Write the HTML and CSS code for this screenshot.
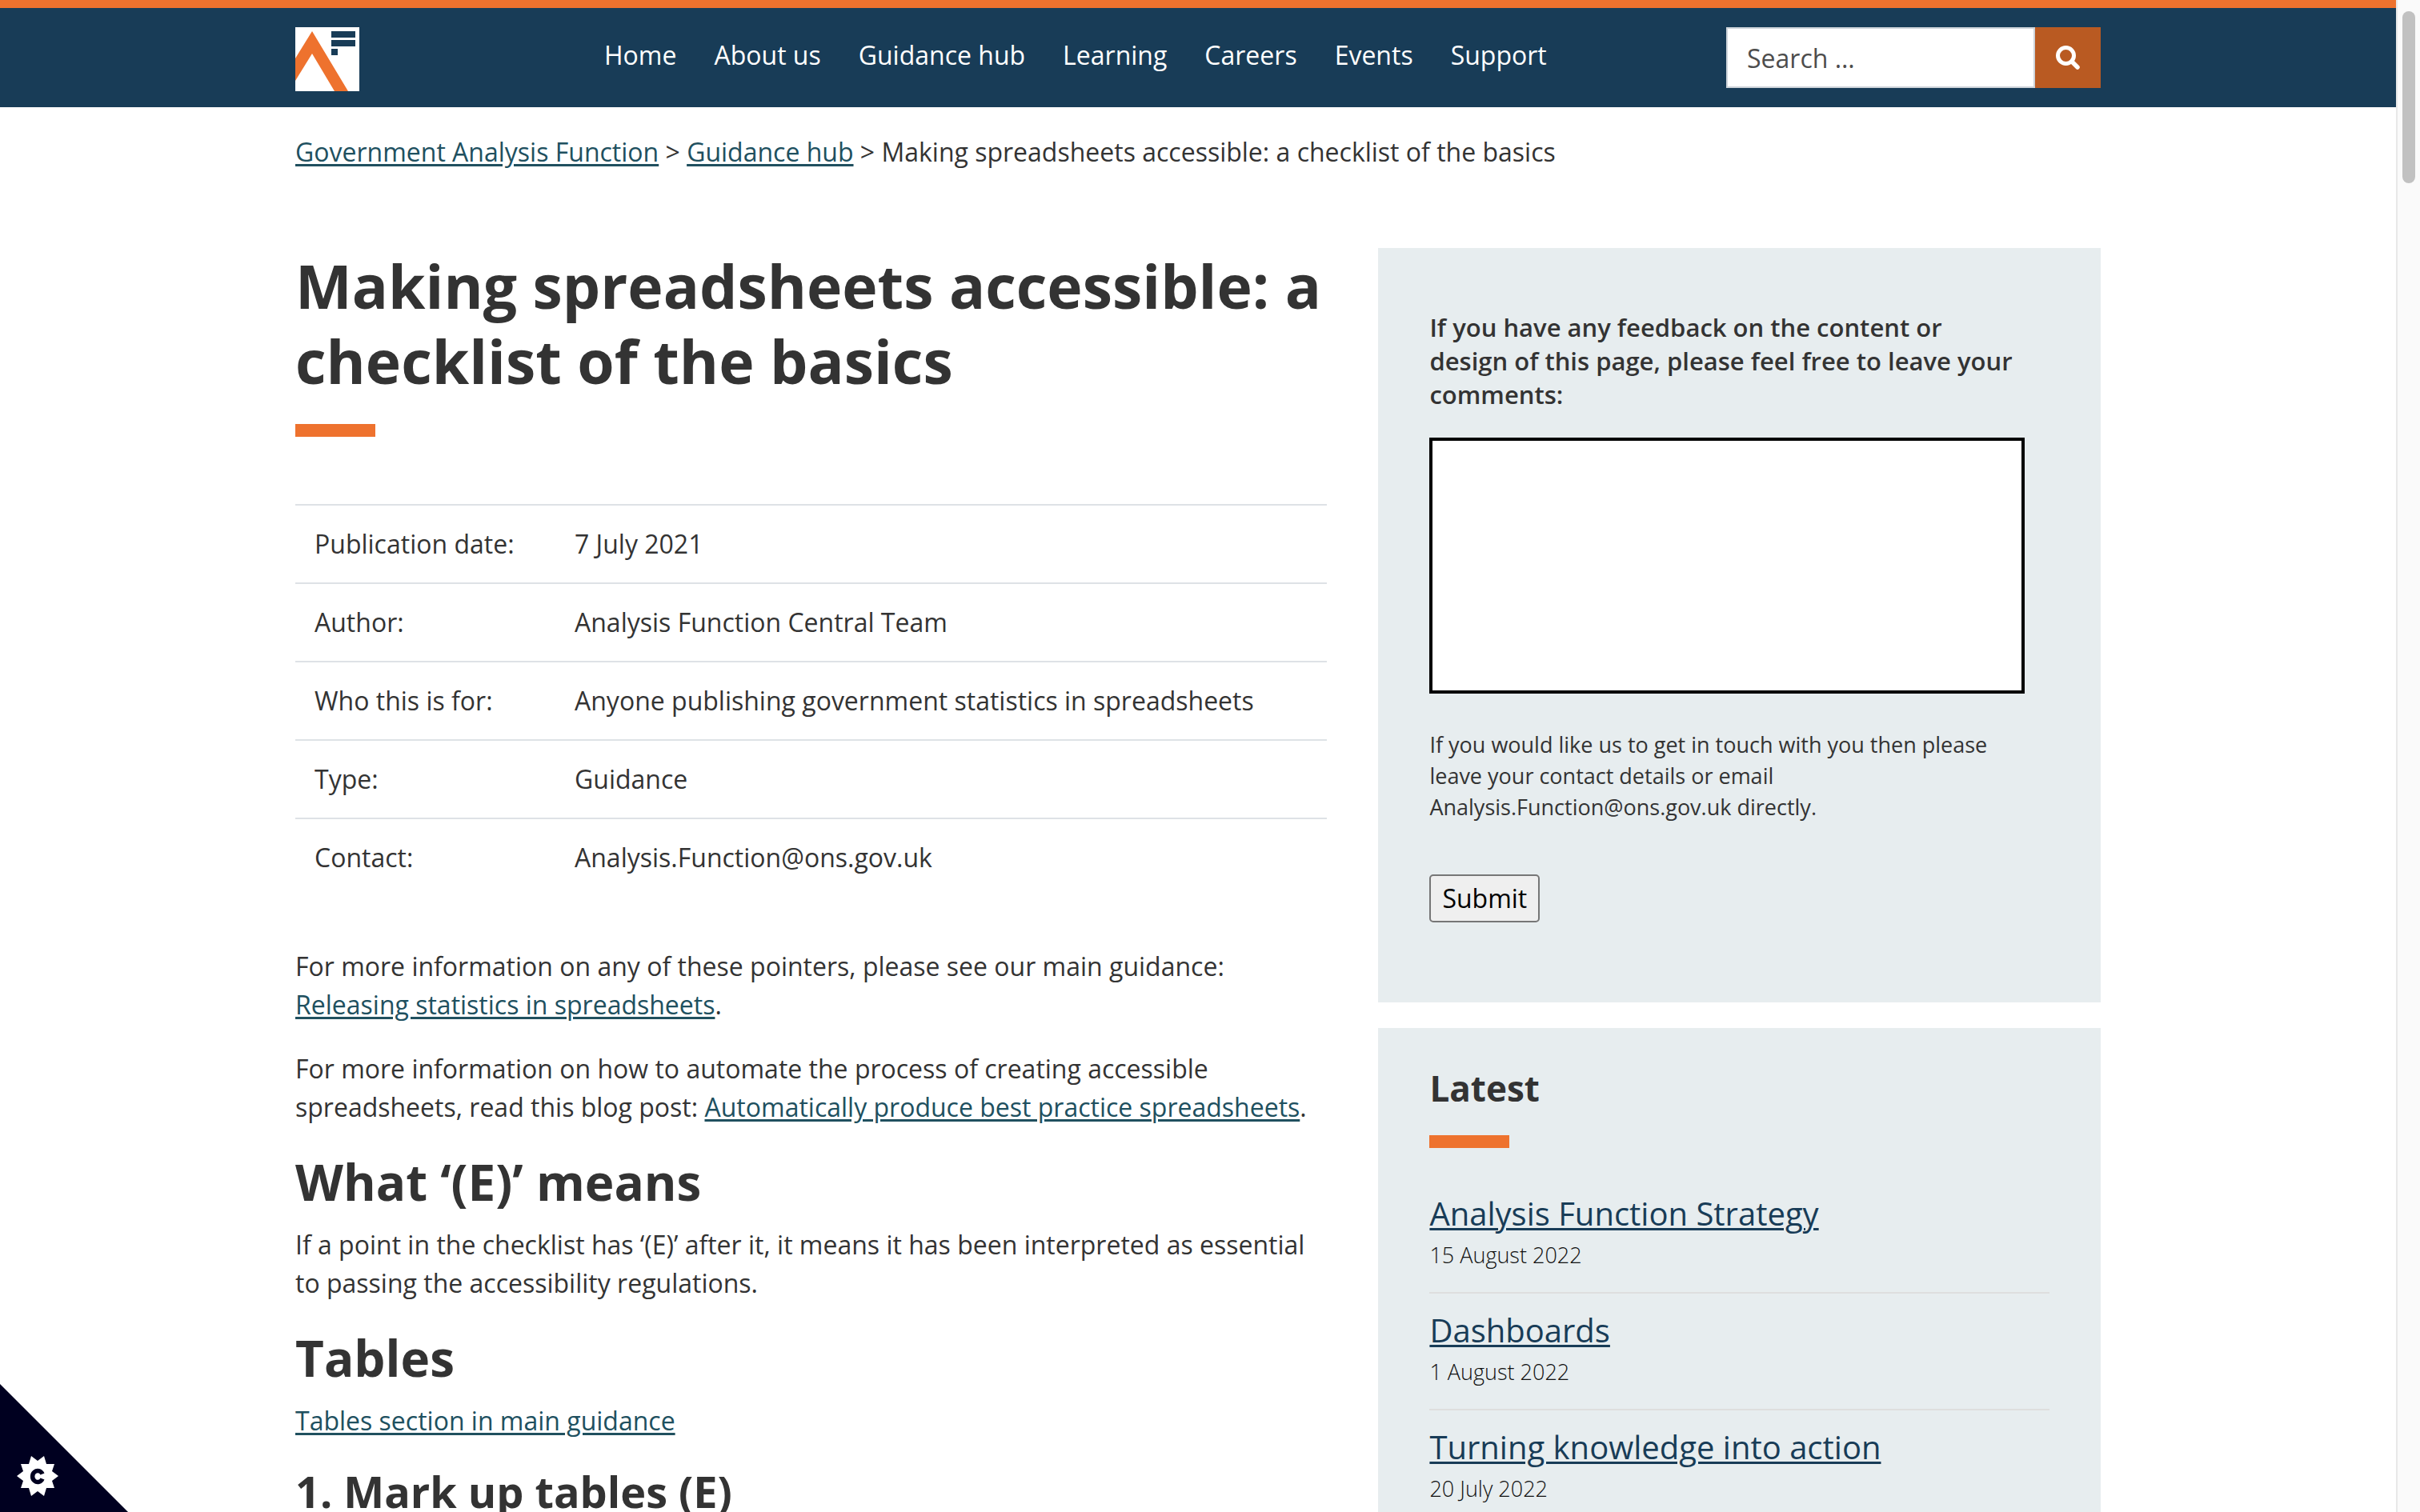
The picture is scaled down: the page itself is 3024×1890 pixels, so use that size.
FILE: index.html
```html
<!DOCTYPE html>
<html lang="en">
<head>
<meta charset="utf-8">
<meta name="viewport" content="width=device-width, initial-scale=1">
<title>Making spreadsheets accessible: a checklist of the basics</title>
<link rel="stylesheet" href="styles.css">
</head>
<body>
<header class="site-header">
  <div class="container header-row">
    <a class="logo" href="#" aria-label="Government Analysis Function home">
      <svg viewBox="0 0 80 80" width="80" height="80" aria-hidden="true">
        <rect width="80" height="80" fill="#fff"/>
        <path d="M0 39 21 5 66 80H49L21 33 0 67Z" fill="#ee722e"/>
        <path d="M45 5h30v8H45zM45 16h30v8H45zM45 27h8v8h-8z" fill="#183c57"/>
      </svg>
    </a>
    <nav class="main-nav" aria-label="Main">
      <a href="#">Home</a>
      <a href="#">About us</a>
      <a href="#">Guidance hub</a>
      <a href="#">Learning</a>
      <a href="#">Careers</a>
      <a href="#">Events</a>
      <a href="#">Support</a>
    </nav>
    <form class="search" role="search">
      <input class="search-input" type="search" placeholder="Search …" aria-label="Search">
      <button class="search-button" type="submit" aria-label="Search">
        <svg viewBox="0 0 30 30" width="30" height="30" fill="none" stroke="#fff" aria-hidden="true">
          <circle cx="12.500" cy="12.500" r="10" stroke-width="5"/>
          <path d="M20 20l7 7" stroke-width="5.500" stroke-linecap="round"/>
        </svg>
      </button>
    </form>
  </div>
</header>

<div class="container">
  <nav class="breadcrumb" aria-label="Breadcrumb">
    <a href="#">Government Analysis Function</a> &gt; <a href="#">Guidance hub</a> &gt; <span>Making spreadsheets accessible: a checklist of the basics</span>
  </nav>

  <div class="columns">
    <main class="article">
      <h1 class="page-title">Making spreadsheets accessible: a checklist of the basics</h1>
      <table class="details">
        <tbody>
          <tr><th scope="row">Publication date:</th><td>7 July 2021</td></tr>
          <tr><th scope="row">Author:</th><td>Analysis Function Central Team</td></tr>
          <tr><th scope="row">Who this is for:</th><td>Anyone publishing government statistics in spreadsheets</td></tr>
          <tr><th scope="row">Type:</th><td>Guidance</td></tr>
          <tr><th scope="row">Contact:</th><td>Analysis.Function@ons.gov.uk</td></tr>
        </tbody>
      </table>
      <p>For more information on any of these pointers, please see our main guidance: <a href="#">Releasing statistics in spreadsheets</a>.</p>
      <p>For more information on how to automate the process of creating accessible spreadsheets, read this blog post: <a href="#">Automatically produce best practice spreadsheets</a>.</p>
      <h2>What ‘(E)’ means</h2>
      <p>If a point in the checklist has ‘(E)’ after it, it means it has been interpreted as essential to passing the accessibility regulations.</p>
      <h2>Tables</h2>
      <p><a href="#">Tables section in main guidance</a></p>
      <h3>1. Mark up tables (E)</h3>
    </main>

    <aside class="sidebar">
      <form class="card feedback">
        <label class="feedback-label" for="comments">If you have any feedback on the content or design of this page, please feel free to leave your comments:</label>
        <textarea class="feedback-text" id="comments"></textarea>
        <p class="feedback-note">If you would like us to get in touch with you then please leave your contact details or email Analysis.Function@ons.gov.uk directly.</p>
        <button class="submit" type="submit">Submit</button>
      </form>
      <section class="card latest">
        <h2 class="latest-title">Latest</h2>
        <ul class="latest-list">
          <li><a href="#">Analysis Function Strategy</a><time datetime="2022-08-15">15 August 2022</time></li>
          <li><a href="#">Dashboards</a><time datetime="2022-08-01">1 August 2022</time></li>
          <li><a href="#">Turning knowledge into action</a><time datetime="2022-07-20">20 July 2022</time></li>
        </ul>
      </section>
    </aside>
  </div>
</div>

<button class="cookie-corner" type="button" aria-label="Cookie settings">
  <svg viewBox="-26 -26 52 52" width="52" height="52" aria-hidden="true">
    <path fill="#fff" d="M26 0 18 6 21 15H11L8 25 0 19-8 25-11 15H-21L-18 6-26 0-18-6-21-15H-11L-8-25 0-19 8-25 11-15H21L18-6Z"/>
    <path fill="none" stroke="#000020" stroke-width="5.500" d="M6 -2.500A6.500 7 0 1 0 6 3.500"/>
  </svg>
</button>
<div class="scroll-track" aria-hidden="true"><div class="scroll-thumb"></div></div>
</body>
</html>
```
FILE: styles.css
```css
:root {
  --navy: #183c57;
  --orange: #ee722e;
  --link: #20505f;
  --text: #333;
}

* {
  box-sizing: border-box;
}

html {
  scrollbar-width: none;
}

body {
  margin: 0;
  padding-right: 30px;
  background: #fff;
  color: var(--text);
  font: 32px/48px "Open Sans", "Noto Sans", sans-serif;
}

a {
  color: var(--link);
  text-decoration-thickness: 3px;
  text-underline-offset: 3px;
}

.container {
  max-width: 2256px;
  margin: 0 auto;
}

/* Header */
.site-header {
  border-top: 10px solid var(--orange);
  background: var(--navy);
}

.header-row {
  display: flex;
  align-items: flex-start;
  padding: 24px 0 20px;
}

.logo svg,
.search svg {
  display: block;
}

.main-nav {
  display: flex;
  gap: 47px;
  margin-left: 306px;
  padding-top: 11px;
}

.main-nav a {
  color: #fff;
  text-decoration: none;
}

.search {
  display: flex;
  margin-left: auto;
}

.search-input {
  width: 386px;
  height: 76px;
  padding: 0 24px;
  border: 2px solid #ced4da;
  border-radius: 0;
  appearance: none;
  background: #fff;
  color: var(--text);
  font: inherit;
}

.search-input::placeholder {
  color: #4d4d4d;
  opacity: 1;
}

.search-button {
  display: flex;
  align-items: center;
  justify-content: center;
  width: 82px;
  padding: 0;
  border: 0;
  background: #b95a22;
}

/* Page */
.breadcrumb {
  padding: 32px 0 96px;
}

.columns {
  display: grid;
  grid-template-columns: 10fr 7fr;
  gap: 64px;
  align-items: start;
}

.page-title {
  margin: 0 0 84px;
  font-size: 75px;
  line-height: 94px;
}

.page-title::after,
.latest-title::after {
  content: "";
  display: block;
  width: 100px;
  height: 16px;
  margin-top: 32px;
  background: var(--orange);
}

.details {
  width: 100%;
  margin-bottom: 64px;
  border-collapse: separate;
  border-spacing: 0;
}

.details th,
.details td {
  padding: 24px;
  border-top: 2px solid #dee2e6;
  font-weight: 400;
  text-align: left;
}

.details th {
  width: 325px;
}

.article p {
  margin: 0 0 32px;
}

.article h2 {
  margin: 0 0 18px;
  font-size: 62px;
  line-height: 74px;
}

.article h3 {
  margin: 0 0 18px;
  font-size: 54px;
  line-height: 64px;
}

/* Sidebar */
.sidebar {
  display: grid;
  gap: 32px;
}

.card {
  background: #e7edef;
}

.feedback {
  padding: 78px 64px 100px;
}

.feedback-label {
  display: block;
  max-width: 96%;
  font-size: 31px;
  font-weight: 600;
  line-height: 42px;
}

.feedback-text {
  display: block;
  width: 96%;
  height: 320px;
  margin-top: 33px;
  border: 4px solid #000;
  background: #fff;
  font: inherit;
  resize: none;
}

.feedback-note {
  max-width: 96%;
  margin: 44px 0 65px;
  font-size: 27px;
  line-height: 39px;
}

.submit {
  display: block;
  height: 60px;
  padding: 0 14px;
  border: 2px solid #767676;
  border-radius: 5px;
  background: #efefef;
  color: #000;
  font: inherit;
}

.latest {
  padding: 48px 64px;
}

.latest-title {
  margin: 0 0 36px;
  font-size: 44px;
  line-height: 54px;
}

.latest-list {
  margin: 0;
  padding: 0;
  list-style: none;
}

.latest-list li {
  padding: 22px 0 26px;
  border-bottom: 2px solid #dedede;
}

.latest-list a {
  display: block;
  color: var(--navy);
  font-size: 40px;
}

.latest-list time {
  display: block;
  margin-top: 8px;
  color: #111;
  font-size: 27px;
  font-weight: 300;
  line-height: 40px;
}

/* Cookie settings corner */
.cookie-corner {
  display: flex;
  align-items: flex-end;
  position: fixed;
  bottom: 0;
  left: 0;
  width: 160px;
  height: 160px;
  padding: 0 0 19px 21px;
  border: 0;
  background: #000020;
  clip-path: polygon(0 0, 100% 100%, 0 100%);
}

.cookie-corner svg {
  display: block;
}

/* Scroll bar */
.scroll-track {
  position: fixed;
  top: 0;
  right: 0;
  bottom: 0;
  width: 30px;
  padding: 14px 6px;
  border-left: 2px solid #e8e8e8;
  background: #fafafa;
}

.scroll-thumb {
  width: 16px;
  height: 215px;
  border-radius: 8px;
  background: #c1c1c1;
}
```
